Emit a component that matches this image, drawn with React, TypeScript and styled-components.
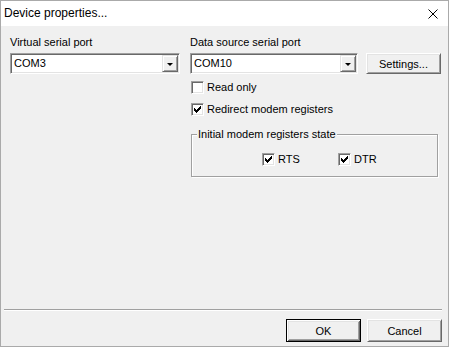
import React from "react";
import styled, { createGlobalStyle } from "styled-components";

const GlobalStyle = createGlobalStyle`
  html, body { margin: 0; padding: 0; background: #fff; }
  body {
    font-family: "Liberation Sans", Arial, sans-serif;
    font-size: 11px;
    color: #000;
  }
  * { box-sizing: border-box; }
`;

const Window = styled.div`
  width: 449px;
  height: 347px;
  border: 1px solid #aaaaaa;
  background: #f0f0f0;
  display: flex;
  flex-direction: column;
`;

const TitleBar = styled.div`
  height: 25px;
  flex: none;
  background: #fff;
  display: flex;
  align-items: center;
  justify-content: space-between;
  padding-left: 3px;
  padding-right: 10px;
  font-size: 12px;
  line-height: 15px;
`;

const CloseIcon = styled.svg`
  display: block;
  width: 10px;
  height: 10px;
`;

const Body = styled.div`
  flex: 1;
  display: flex;
  flex-direction: column;
`;

const Main = styled.div`
  flex: 1;
  display: flex;
  gap: 10px;
  padding: 10px 6px 0 9px;
`;

const Column = styled.div<{ $width: number }>`
  width: ${(p) => p.$width}px;
  display: flex;
  flex-direction: column;
`;

const Label = styled.div`
  height: 13px;
  line-height: 13px;
  margin-bottom: 4px;
  white-space: nowrap;
`;

const ComboRow = styled.div`
  display: flex;
  gap: 8px;
`;

const Combo = styled.div<{ $width: number }>`
  width: ${(p) => p.$width}px;
  height: 21px;
  background: #fff;
  border: 1px solid;
  border-color: #a0a0a0 #fff #fff #a0a0a0;
  box-shadow: inset 1px 1px 0 #696969, inset -1px -1px 0 #e3e3e3;
  display: flex;
  align-items: center;
  padding: 1px 1px 1px 3px;
`;

const ComboText = styled.span`
  flex: 1;
  line-height: 13px;
`;

const DropButton = styled.span`
  width: 16px;
  height: 17px;
  background: #f0f0f0;
  border: 1px solid;
  border-color: #e3e3e3 #696969 #696969 #e3e3e3;
  box-shadow: inset 1px 1px 0 #fff, inset -1px -1px 0 #a0a0a0;
  display: flex;
  align-items: center;
  justify-content: center;
`;

const Arrow = styled.span`
  width: 0;
  height: 0;
  border-left: 3px solid transparent;
  border-right: 3px solid transparent;
  border-top: 3px solid #000;
  margin-top: 1px;
`;

const Button = styled.button<{ $default?: boolean; $height?: number }>`
  width: 75px;
  height: ${(p) => p.$height ?? 23}px;
  padding: 0;
  margin: 0;
  font-family: "Liberation Sans", Arial, sans-serif;
  font-size: 11px;
  color: #000;
  background: #f0f0f0;
  border: 1px solid;
  border-color: ${(p) => (p.$default ? "#000" : "#fff #696969 #696969 #fff")};
  box-shadow: ${(p) =>
    p.$default
      ? "inset 1px 1px 0 #fff, inset -1px -1px 0 #696969, inset 2px 2px 0 #e3e3e3, inset -2px -2px 0 #a0a0a0"
      : "inset 1px 1px 0 #e3e3e3, inset -1px -1px 0 #a0a0a0"};
`;

const CheckRow = styled.label<{ $mt: number }>`
  display: flex;
  align-items: center;
  gap: 3px;
  height: 13px;
  margin: ${(p) => p.$mt}px 0 0 1px;
  line-height: 13px;
  white-space: nowrap;
`;

const CheckBox = styled.span`
  width: 13px;
  height: 13px;
  flex: none;
  background: #fff;
  border: 1px solid;
  border-color: #a0a0a0 #fff #fff #a0a0a0;
  box-shadow: inset 1px 1px 0 #696969, inset -1px -1px 0 #e3e3e3;
  position: relative;
`;

const CheckMark = styled.svg`
  position: absolute;
  left: 0;
  top: 0;
  width: 11px;
  height: 11px;
`;

const Group = styled.fieldset`
  width: 247px;
  margin: 12px 0 0 1px;
  padding: 12px 0 10px 5px;
  border: 1px solid #a0a0a0;
  box-shadow: 1px 1px 0 #fff, inset 1px 1px 0 #fff;
`;

const Legend = styled.legend`
  padding: 0 1px;
  line-height: 13px;
  height: 13px;
  background: #f0f0f0;
`;

const GroupRow = styled.div`
  display: flex;
  padding-left: 64px;
`;

const GroupItem = styled.div`
  width: 76px;
`;

const Footer = styled.div`
  display: flex;
  flex-direction: column;
  padding-bottom: 4px;
`;

const Separator = styled.div`
  height: 2px;
  margin: 0 6px 0 3px;
  border-top: 1px solid #a0a0a0;
  border-bottom: 1px solid #fff;
`;

const ButtonRow = styled.div`
  display: flex;
  justify-content: flex-end;
  gap: 6px;
  margin-top: 8px;
  padding-right: 6px;
`;

const CHECK_PATH =
  "M2 4h1v3h-1zM3 5h1v3h-1zM4 6h1v3h-1zM5 5h1v3h-1zM6 4h1v3h-1zM7 3h1v3h-1zM8 2h1v3h-1z";

function Check({ label, checked, mt = 0 }: { label: string; checked?: boolean; mt?: number }) {
  return (
    <CheckRow $mt={mt}>
      <CheckBox>
        {checked && (
          <CheckMark viewBox="0 0 11 11" shapeRendering="crispEdges">
            <path d={CHECK_PATH} fill="#000" />
          </CheckMark>
        )}
      </CheckBox>
      <span>{label}</span>
    </CheckRow>
  );
}

function ComboBox({ value, width }: { value: string; width: number }) {
  return (
    <Combo $width={width}>
      <ComboText>{value}</ComboText>
      <DropButton>
        <Arrow />
      </DropButton>
    </Combo>
  );
}

export default function App() {
  return (
    <>
      <GlobalStyle />
      <Window>
        <TitleBar>
          <span>Device properties...</span>
          <CloseIcon viewBox="0 0 10 10">
            <path d="M0.5 0.5L9.5 9.5M9.5 0.5L0.5 9.5" stroke="#000" strokeWidth="1" fill="none" />
          </CloseIcon>
        </TitleBar>
        <Body>
          <Main>
            <Column $width={170}>
              <Label>Virtual serial port</Label>
              <ComboBox value="COM3" width={170} />
            </Column>
            <Column $width={251}>
              <Label>Data source serial port</Label>
              <ComboRow>
                <ComboBox value="COM10" width={168} />
                <Button $height={21}>Settings...</Button>
              </ComboRow>
              <Check label="Read only" mt={7} />
              <Check label="Redirect modem registers" checked mt={9} />
              <Group>
                <Legend>Initial modem registers state</Legend>
                <GroupRow>
                  <GroupItem>
                    <Check label="RTS" checked />
                  </GroupItem>
                  <GroupItem>
                    <Check label="DTR" checked />
                  </GroupItem>
                </GroupRow>
              </Group>
            </Column>
          </Main>
          <Footer>
            <Separator />
            <ButtonRow>
              <Button $default>OK</Button>
              <Button>Cancel</Button>
            </ButtonRow>
          </Footer>
        </Body>
      </Window>
    </>
  );
}
